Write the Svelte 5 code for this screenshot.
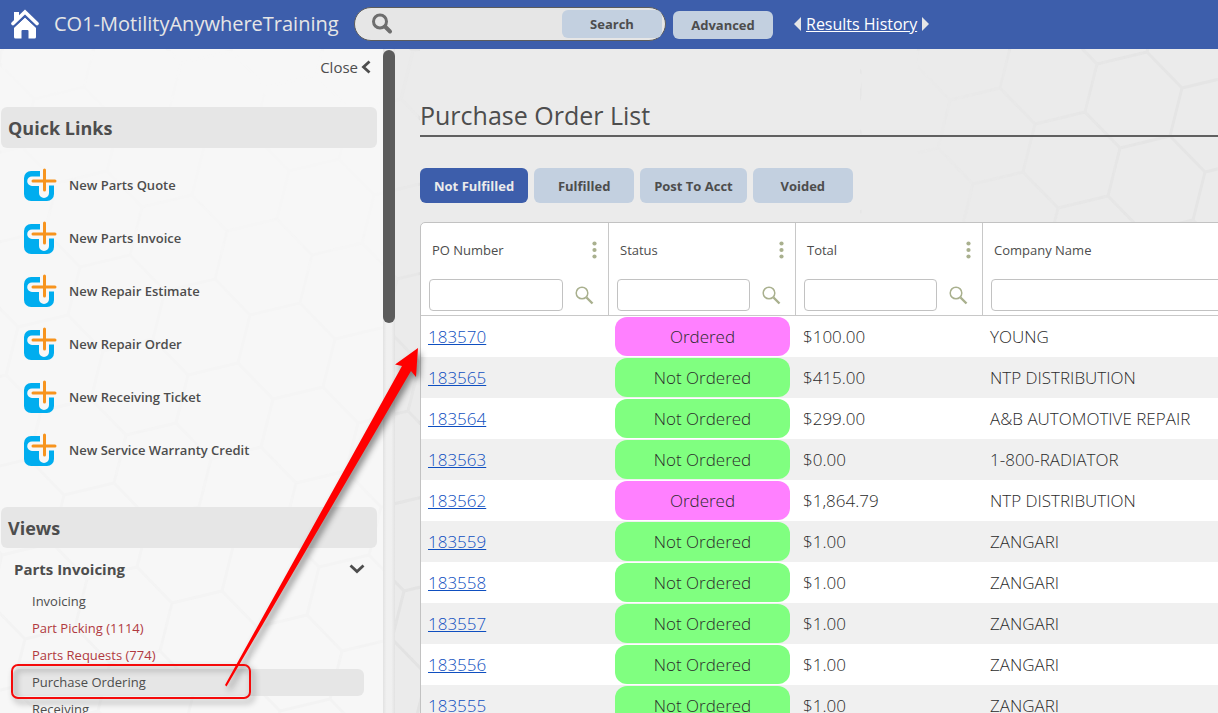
<script>
    const quickLinks = [
        "New Parts Quote",
        "New Parts Invoice",
        "New Repair Estimate",
        "New Repair Order",
        "New Receiving Ticket",
        "New Service Warranty Credit",
    ];

    const views = [
        { label: "Invoicing" },
        { label: "Part Picking (1114)", alert: true },
        { label: "Parts Requests (774)", alert: true },
        { label: "Purchase Ordering", selected: true },
        { label: "Receiving" },
    ];

    const columns = ["PO Number", "Status", "Total", "Company Name"];

    const orders = [
        { po: "183570", status: "Ordered", total: "$100.00", company: "YOUNG" },
        { po: "183565", status: "Not Ordered", total: "$415.00", company: "NTP DISTRIBUTION" },
        { po: "183564", status: "Not Ordered", total: "$299.00", company: "A&B AUTOMOTIVE REPAIR" },
        { po: "183563", status: "Not Ordered", total: "$0.00", company: "1-800-RADIATOR" },
        { po: "183562", status: "Ordered", total: "$1,864.79", company: "NTP DISTRIBUTION" },
        { po: "183559", status: "Not Ordered", total: "$1.00", company: "ZANGARI" },
        { po: "183558", status: "Not Ordered", total: "$1.00", company: "ZANGARI" },
        { po: "183557", status: "Not Ordered", total: "$1.00", company: "ZANGARI" },
        { po: "183556", status: "Not Ordered", total: "$1.00", company: "ZANGARI" },
        { po: "183555", status: "Not Ordered", total: "$1.00", company: "ZANGARI" },
    ];

    const tabs = ["Not Fulfilled", "Fulfilled", "Post To Acct", "Voided"];
    let activeTab = $state("Not Fulfilled");

    // tilted honeycomb, three edges drawn from every second corner
    function honeycomb(x0, y0, range) {
        let d = "";
        for (let i = -range; i <= range; i++) {
            for (let j = -range; j <= range; j++) {
                const x = x0 + i * 85 + j * 23;
                const y = y0 + i * 24 + j * 84;
                d += `M${x} ${y}l50 -12M${x} ${y}l-12 48M${x} ${y}l-35 -36`;
            }
        }
        return d;
    }

    const leftComb = honeycomb(172, 554, 9);
    const rightComb = honeycomb(237, 15, 5);
</script>

<div class="page">
    <header>
        <a class="home" href="#home" aria-label="Home">
            <svg width="28" height="30" viewBox="0 0 28 30">
                <path d="M3 3h5v4l-5 5z" fill="#fff" />
                <path d="M2 14.500L14 3l12 11.500" fill="none" stroke="#fff" stroke-width="3.600" stroke-linecap="round" stroke-linejoin="miter" />
                <path d="M14 8.500l11 10.200V28a1.500 1.500 0 0 1-1.500 1.500H17.500V22a1 1 0 0 0-1-1h-5a1 1 0 0 0-1 1v7.500H4.500A1.500 1.500 0 0 1 3 28v-9.300z" fill="#fff" />
                <path d="M2 18.700L14 7.500l12 11.200" fill="none" stroke="#3d5eab" stroke-width="1.200" />
            </svg>
        </a>
        <span class="company">CO1-MotilityAnywhereTraining</span>
        <form class="search">
            <svg width="22" height="22" viewBox="0 0 22 22">
                <circle cx="9" cy="8.500" r="6.500" fill="none" stroke="#6e6e6e" stroke-width="3" />
                <path d="M14 13.500l5 5" stroke="#6e6e6e" stroke-width="4" stroke-linecap="round" />
            </svg>
            <input type="text" aria-label="Search" />
            <button type="button">Search</button>
        </form>
        <button class="advanced" type="button">Advanced</button>
        <nav class="history" aria-label="History">
            <svg width="7" height="14" viewBox="0 0 7 14"><path d="M7 0v14L0 7z" fill="#e6e6e6" /></svg>
            <a href="#history">Results History</a>
            <svg width="7" height="14" viewBox="0 0 7 14"><path d="M0 0v14l7-7z" fill="#e6e6e6" /></svg>
        </nav>
    </header>

    <div class="body">
        <svg class="comb" width="420" height="664">
            <defs>
                <linearGradient id="fade-left" gradientUnits="userSpaceOnUse" x1="300" y1="40" x2="180" y2="664">
                    <stop offset="0" stop-color="#fff" stop-opacity="0.100" />
                    <stop offset="1" stop-color="#fff" />
                </linearGradient>
                <mask id="mask-left" maskUnits="userSpaceOnUse" x="0" y="0" width="420" height="664">
                    <rect width="420" height="664" fill="url(#fade-left)" />
                </mask>
            </defs>
            <path d={leftComb} mask="url(#mask-left)" />
        </svg>
        <svg class="comb right" width="358" height="180">
            <defs>
                <linearGradient id="fade-right" x1="0" y1="0" x2="1" y2="0">
                    <stop offset="0.150" stop-color="#fff" stop-opacity="0" />
                    <stop offset="0.800" stop-color="#fff" />
                </linearGradient>
                <mask id="mask-right" maskUnits="userSpaceOnUse" x="0" y="0" width="358" height="180">
                    <rect width="358" height="180" fill="url(#fade-right)" />
                </mask>
            </defs>
            <path d={rightComb} mask="url(#mask-right)" />
        </svg>

        <aside>
            <button class="close" type="button">
                Close
                <svg width="10" height="14" viewBox="0 0 10 14"><path d="M8.500 1.500L2.500 7l6 5.500" fill="none" stroke="#4d4d4d" stroke-width="2.800" /></svg>
            </button>

            <h2>Quick Links</h2>
            <ul class="quick">
                {#each quickLinks as link}
                    <li>
                        <a href="#new">
                            <svg width="34" height="34" viewBox="0 0 34 34">
                                <path d="M7 3h23v23a7 7 0 0 1-7 7H7a7 7 0 0 1-7-7V10a7 7 0 0 1 7-7z" fill="#00adef" />
                                <path d="M16 0h18v17.500h-9V25a5 5 0 0 1-10 0v-7H8a4.800 4.800 0 0 1 0-9.600h8z" fill="#f7f7f7" />
                                <path d="M20.500 2v20M9 13h22" fill="none" stroke="#f7941e" stroke-width="3" stroke-linecap="round" />
                            </svg>
                            {link}
                        </a>
                    </li>
                {/each}
            </ul>

            <h2>Views</h2>
            <button class="group" type="button">
                Parts Invoicing
                <svg width="16" height="10" viewBox="0 0 16 10"><path d="M1.500 1.500L8 7.500l6.500-6" fill="none" stroke="#4d4d4d" stroke-width="2.800" /></svg>
            </button>
            <ul class="views">
                {#each views as view}
                    <li>
                        <a href="#view" class:alert={view.alert} class:selected={view.selected}>{view.label}</a>
                    </li>
                {/each}
            </ul>
        </aside>

        <div class="scrollbar"><div class="thumb"></div></div>

        <main>
            <h1>Purchase Order List</h1>

            <div class="tabs">
                {#each tabs as tab}
                    <button type="button" class:active={tab === activeTab} onclick={() => (activeTab = tab)}>{tab}</button>
                {/each}
            </div>

            <table>
                <colgroup>
                    <col class="first" />
                    <col class="narrow" />
                    <col class="narrow" />
                    <col />
                </colgroup>
                <thead>
                    <tr>
                        {#each columns as column}
                            <th>
                                <div class="title">
                                    {column}
                                    <svg width="5" height="18" viewBox="0 0 5 18" fill="#a9b08e">
                                        <circle cx="2.500" cy="2.500" r="2.100" />
                                        <circle cx="2.500" cy="9" r="2.100" />
                                        <circle cx="2.500" cy="15.500" r="2.100" />
                                    </svg>
                                </div>
                                <div class="filter">
                                    <input type="text" aria-label="Filter {column}" />
                                    <svg width="19" height="19" viewBox="0 0 19 19" fill="none" stroke="#a9b08e">
                                        <circle cx="7" cy="7" r="5.800" stroke-width="1.500" />
                                        <path d="M11.500 11.500l6 6" stroke-width="2.400" />
                                    </svg>
                                </div>
                            </th>
                        {/each}
                    </tr>
                </thead>
                <tbody>
                    {#each orders as order}
                        <tr>
                            <td><a href="#po">{order.po}</a></td>
                            <td class="status"><span class:ordered={order.status === "Ordered"}>{order.status}</span></td>
                            <td>{order.total}</td>
                            <td>{order.company}</td>
                        </tr>
                    {/each}
                </tbody>
            </table>
        </main>
    </div>

    <!-- callout from the menu entry to the list -->
    <svg class="callout" width="440" height="713">
        <rect x="12" y="665" width="238" height="33" rx="6" fill="none" stroke="#f50a0a" stroke-width="2" />
        <path d="M418 348L395 364.500l7 1.500L225 685l1.500 1.500L411 371l5 6z" fill="#f00" />
    </svg>
</div>

<style>
    :global(body) {
        margin: 0;
        font-family: "Open Sans", sans-serif;
        color: #4d4d4d;
    }

    .page {
        position: relative;
        display: flex;
        flex-direction: column;
        height: 100vh;
        overflow: hidden;
    }

    button,
    input {
        font-family: inherit;
        color: inherit;
        box-sizing: border-box;
    }

    button {
        border: none;
        padding: 0;
        cursor: pointer;
    }

    svg {
        flex-shrink: 0;
    }

    ul {
        list-style: none;
        margin: 0;
        padding: 0;
    }

    /* top bar */
    header {
        display: flex;
        align-items: center;
        box-sizing: border-box;
        height: 49px;
        flex-shrink: 0;
        padding: 0 0 1px 11px;
        background: #3d5eab;
        color: #e6e6e6;
    }

    .home {
        display: flex;
        margin-right: 15px;
    }

    .company {
        width: 300px;
        padding-bottom: 2px;
        font-size: 20px;
        white-space: nowrap;
    }

    .search {
        display: flex;
        align-items: center;
        box-sizing: border-box;
        width: 312px;
        height: 34px;
        padding: 0 3px 0 16px;
        border: 1px solid #5c5c5c;
        border-radius: 17px;
        background: #e6e6e6;
    }

    .search input {
        flex: 1;
        min-width: 0;
        height: 28px;
        border: none;
        background: none;
        outline: none;
    }

    .search button,
    .advanced {
        width: 100px;
        height: 28px;
        border-radius: 6px;
        background: #c3d0e0;
        color: #4d4d4d;
        font-size: 13px;
        font-weight: 700;
    }

    .advanced {
        margin: 2px 0 0 7px;
    }

    .history {
        display: flex;
        align-items: center;
        gap: 5px;
        margin-left: 21px;
        font-size: 16px;
    }

    .history a {
        color: #fff;
    }

    /* layout */
    .body {
        position: relative;
        display: flex;
        flex: 1;
        min-height: 0;
        background: #ebebeb;
    }

    .comb {
        position: absolute;
        top: 0;
        left: 0;
        fill: none;
        stroke: #e1e1e1;
        stroke-width: 3;
    }

    .comb.right {
        left: auto;
        right: 0;
        stroke: #e5e5e5;
    }

    aside,
    .scrollbar,
    main {
        position: relative;
    }

    aside {
        width: 383px;
        box-sizing: border-box;
        flex-shrink: 0;
        padding: 7px 6px 0 1px;
        background: rgba(255, 255, 255, 0.6);
        overflow: hidden;
    }

    .scrollbar {
        width: 12px;
        flex-shrink: 0;
        padding-top: 1px;
        background: linear-gradient(to right, #e2e2e2, #f0f0f0 30%, #f0f0f0 70%, #e2e2e2);
    }

    .thumb {
        height: 273px;
        border-radius: 6px;
        background: #5c5c5c;
    }

    /* sidebar */
    .close {
        display: flex;
        align-items: center;
        gap: 3px;
        height: 22px;
        margin: 0 6px 29px auto;
        background: none;
        font-size: 15px;
    }

    h2 {
        margin: 0;
        padding: 1px 7px 0;
        border-radius: 6px;
        background: #e6e6e6;
        font-size: 18px;
        line-height: 40px;
        font-weight: 700;
    }

    .quick {
        padding: 10px 0 31px 23px;
    }

    .quick a {
        display: flex;
        align-items: center;
        gap: 11px;
        height: 53px;
        color: inherit;
        font-size: 13px;
        font-weight: 600;
        text-decoration: none;
    }

    .group {
        display: flex;
        align-items: center;
        justify-content: space-between;
        width: 100%;
        height: 40px;
        padding: 1px 12px 0 13px;
        background: none;
        font-size: 15px;
        font-weight: 700;
    }

    .views {
        padding: 0 13px 0 19px;
    }

    .views a {
        display: block;
        margin-left: -7px;
        padding-left: 19px;
        border-radius: 6px;
        color: inherit;
        font-size: 13px;
        line-height: 27px;
        text-decoration: none;
    }

    .views .alert {
        color: #b13a3f;
    }

    .views .selected {
        background: #e6e6e6;
    }

    /* list */
    main {
        flex: 1;
        min-width: 0;
        padding-left: 25px;
        overflow: hidden;
    }

    h1 {
        margin: 48px 0 31px;
        padding-bottom: 2px;
        border-bottom: 2px solid #606060;
        font-size: 25px;
        line-height: 36px;
        font-weight: 400;
    }

    .tabs {
        display: flex;
        gap: 6px;
        margin-bottom: 19px;
    }

    .tabs button {
        min-width: 100px;
        height: 35px;
        padding: 0 14px;
        border-radius: 6px;
        background: #c3d0e0;
        font-size: 13px;
        font-weight: 700;
    }

    .tabs .active {
        background: #3d5eab;
        color: #ebebeb;
    }

    table {
        width: 1100px;
        table-layout: fixed;
        border-collapse: separate;
        border-spacing: 0;
        border: 1px solid #c2c2c2;
        border-radius: 5px 0 0 0;
        background: #fff;
    }

    .first {
        width: 188px;
    }

    .narrow {
        width: 187px;
    }

    th {
        padding: 0 8px 4px;
        border-right: 1px solid #c8c8c8;
        border-bottom: 1px solid #c8c8c8;
        font-size: 13px;
        font-weight: 400;
        text-align: left;
    }

    .title,
    .filter {
        display: flex;
        align-items: center;
        justify-content: space-between;
    }

    .title {
        height: 54px;
        padding: 0 3px 2px;
    }

    .filter {
        gap: 12px;
        padding-right: 6px;
    }

    .filter input {
        flex: 1;
        min-width: 0;
        height: 32px;
        border: 1px solid #c2c2c2;
        border-radius: 4px;
        background: #fff;
    }

    td {
        height: 41px;
        padding: 0 7px;
        color: #2b2b2b;
        font-size: 17px;
        font-weight: 300;
    }

    tbody tr:nth-child(even) {
        background: #f0f0f0;
    }

    td a {
        color: #0f4fc0;
    }

    .status {
        padding: 0 6px;
    }

    .status span {
        display: block;
        border-radius: 12px;
        background: #80ff80;
        line-height: 39px;
        text-align: center;
    }

    .status .ordered {
        background: #ff80ff;
    }

    .callout {
        position: absolute;
        top: 0;
        left: 0;
        pointer-events: none;
        filter: drop-shadow(3px 4px 3px rgba(0, 0, 0, 0.45));
    }
</style>
